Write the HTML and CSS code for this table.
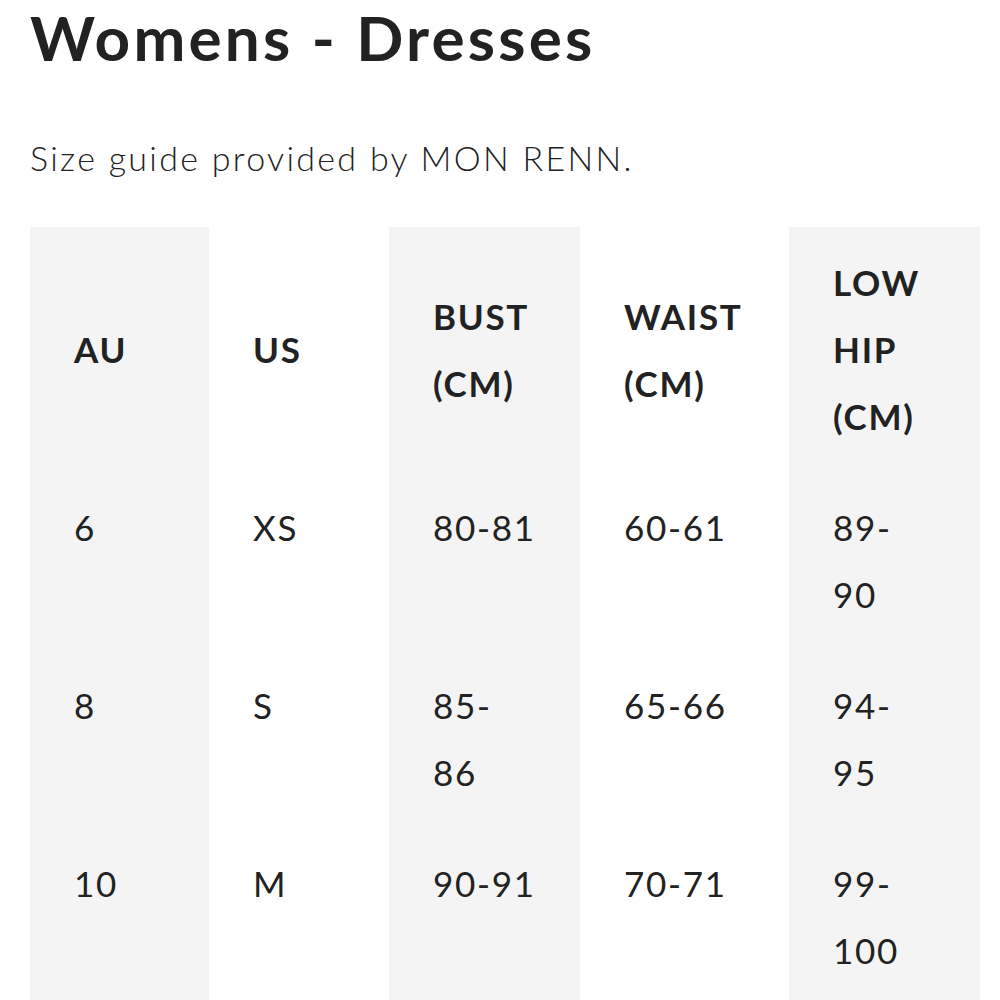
FILE: index.html
```html
<!DOCTYPE html>
<html>
<head>
<meta charset="utf-8">
<link rel="stylesheet" href="styles.css">
</head>
<body>
<div class="page">
  <h1 class="title">Womens - Dresses</h1>
  <p class="intro">Size guide provided by MON RENN.</p>
  <table class="sizes">
    <colgroup>
      <col class="c1"><col class="c2"><col class="c3"><col class="c4"><col class="c5">
    </colgroup>
    <thead>
      <tr>
        <th class="shade">AU</th>
        <th>US</th>
        <th class="shade">BUST<br>(CM)</th>
        <th>WAIST<br>(CM)</th>
        <th class="shade">LOW<br>HIP<br>(CM)</th>
      </tr>
    </thead>
    <tbody>
      <tr>
        <td class="shade">6</td><td>XS</td><td class="shade">80-81</td><td>60-61</td><td class="shade">89-<br>90</td>
      </tr>
      <tr>
        <td class="shade">8</td><td>S</td><td class="shade">85-<br>86</td><td>65-66</td><td class="shade">94-<br>95</td>
      </tr>
      <tr>
        <td class="shade">10</td><td>M</td><td class="shade">90-91</td><td>70-71</td><td class="shade">99-<br>100</td>
      </tr>
    </tbody>
  </table>
</div>
</body>
</html>
```
FILE: styles.css
```css
html, body {
  margin: 0;
  padding: 0;
  background: #fff;
}
body {
  font-family: "Lato", "Open Sans", sans-serif;
  color: #222;
}
.page {
  padding: 0 20px 0 30px;
}
.title {
  margin: 0;
  font-size: 62px;
  font-weight: 700;
  line-height: 75px;
  letter-spacing: 3.2px;
}
.intro {
  margin: 60px 0 0;
  font-size: 34px;
  font-weight: 300;
  line-height: 46px;
  letter-spacing: 2.3px;
}
.sizes {
  margin-top: 46px;
  border-collapse: collapse;
  table-layout: fixed;
  width: 950px;
}
.c1 { width: 179px; }
.c2 { width: 180px; }
.c3 { width: 191px; }
.c4 { width: 209px; }
.c5 { width: 191px; }
.sizes th, .sizes td {
  text-align: left;
  padding: 22px 10px 22px 44px;
  font-size: 35px;
  line-height: 67px;
  letter-spacing: 1.7px;
}
.sizes th {
  font-weight: 700;
  vertical-align: middle;
}
.sizes td {
  font-weight: 400;
  vertical-align: top;
}
.shade {
  background: #f4f4f4;
}
```
